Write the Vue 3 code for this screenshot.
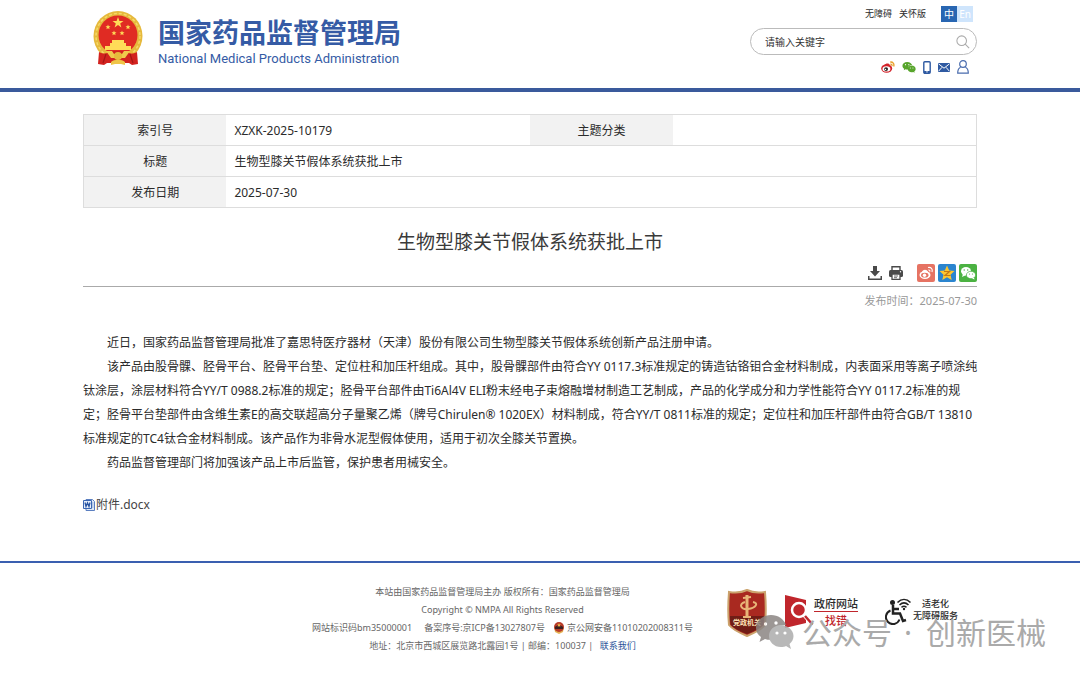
<script setup>
const meta = [
  ['标题', '生物型膝关节假体系统获批上市'],
  ['发布日期', '2025-07-30'],
]
</script>

<template>
  <div class="page">
    <header class="top">
      <div class="wrap top-in">
        <a class="brand" href="#">
          <svg class="emblem" viewBox="0 0 50 56" aria-hidden="true">
            <ellipse cx="25" cy="25" rx="24.5" ry="25" fill="#e6b93c" />
            <ellipse cx="25" cy="25" rx="22" ry="22.5" fill="none" stroke="#f5d869" stroke-width="1.5" stroke-dasharray="3 2" />
            <circle cx="25" cy="24" r="19.5" fill="#e02b23" />
            <path d="m25 6 1.4 3.9h4.1l-3.3 2.5 1.2 4-3.4-2.4-3.4 2.4 1.2-4-3.3-2.5h4.1Z" fill="#ffdc58" />
            <g fill="#ffdc58">
              <path id="star" d="m15 13.5.7 1.7 1.8.1-1.4 1.2.5 1.8-1.6-1-1.6 1 .5-1.8-1.4-1.2 1.8-.1Z" />
              <use href="#star" x="20" />
              <use href="#star" x="6" y="6" />
              <use href="#star" x="14" y="6" />
              <path d="M19 29h12v3h2v3h5v4H12v-4h5v-3h2Z" />
            </g>
            <path d="M6 41c6 3 9 1 11-1h16c2 2 5 4 11 1l1 12-6 1-3-2H14l-3 2-6-1Z" fill="#d2221f" />
            <path d="M13 40h6l2 3h8l2-3h6l-5 7H18Z" fill="#f0c94c" />
            <circle cx="25" cy="45" r="4" fill="#e6b93c" />
            <path d="M18 54v-3c3-3 11-3 14 0v3l-4-1h-6Z" fill="#efc548" />
            <path d="m13 43-3 9m27-9 3 9" stroke="#a31614" stroke-width="1.2" />
          </svg>
          <span class="names">
            <strong>国家药品监督管理局</strong>
            <span>National Medical Products Administration</span>
          </span>
        </a>
        <div class="tools">
          <nav class="lang">
            <a href="#">无障碍</a><a href="#">关怀版</a>
            <span class="switch"><a class="zh" href="#">中</a><a class="en" href="#">En</a></span>
          </nav>
          <form class="search" @submit.prevent>
            <input type="text" aria-label="搜索" placeholder="请输入关键字" />
            <button aria-label="搜索" type="submit">
              <svg viewBox="0 0 16 16"><circle cx="6.5" cy="6.5" r="5.5" /><path d="m10.5 10.5 4.500 4.500" /></svg>
            </button>
          </form>
          <nav class="social">
            <a href="#" aria-label="微博">
              <svg viewBox="0 0 16 14"><ellipse cx="6.500" cy="8.500" rx="6.300" ry="4.800" fill="#d3232b" /><path d="M4 5c1-3 6-3 6 0Z" fill="#d3232b" /><ellipse cx="6.200" cy="9" rx="4.500" ry="3" fill="#fff" /><circle cx="5.800" cy="9.200" r="2.200" fill="#222" /><circle cx="5.200" cy="9.600" r=".8" fill="#fff" /><path d="M10.500 1.200c3-.5 5 2 4 5M10.700 3.700c1.500-.2 2.200.8 1.800 2" fill="none" stroke="#e8a02a" stroke-width="1.500" /></svg>
            </a>
            <a href="#" aria-label="微信">
              <svg viewBox="0 0 16 14"><path d="M6 1C2.500 1 .5 3 .5 5.400c0 1.500.8 2.700 2 3.500L2 10.500l2-1c1 .3 2.500.3 3 0C6.500 6.500 9 4.500 11.500 4.600 11 2.500 9 1 6 1Z" fill="#58a52c" /><path d="M11 5.200c-2.600 0-4.500 1.700-4.500 3.800s2 3.800 4.500 3.800c.6 0 1.200-.1 1.800-.3l1.700.9-.5-1.500c1-.7 1.600-1.700 1.600-2.900 0-2.100-2-3.800-4.600-3.800Z" fill="#58a52c" /><g fill="#fff"><circle cx="4" cy="4.200" r=".7" /><circle cx="7.800" cy="4.200" r=".7" /><circle cx="9.500" cy="8" r=".6" /><circle cx="12.500" cy="8" r=".6" /></g></svg>
            </a>
            <a class="slim" href="#" aria-label="手机版">
              <svg viewBox="0 0 8 13"><rect x=".8" y=".8" width="6.400" height="11.400" rx="1" fill="none" stroke="#2f5aa2" stroke-width="1.400" /><path d="M1 10h6v2H1Z" fill="#2f5aa2" /><path d="M3.300 10.900h1.400" stroke="#fff" /></svg>
            </a>
            <a class="mid" href="#" aria-label="邮箱">
              <svg viewBox="0 0 12 9"><path d="M0 0h12v9H0Z" fill="#2f5aa2" /><path d="m.5.800 5.500 4.400L11.500.800M.5 8.300l3.500-4m7.500 4-3.500-4" fill="none" stroke="#fff" /></svg>
            </a>
            <a class="mid" href="#" aria-label="个人中心">
              <svg viewBox="0 0 12 14"><circle cx="6" cy="4" r="3.300" fill="none" stroke="#4a6cae" stroke-width="1.200" /><path d="M3.600 7.200C1.500 8 .7 10 .7 13.200h10.600c0-3.200-.8-5.200-2.900-6" fill="none" stroke="#4a6cae" stroke-width="1.200" /></svg>
            </a>
          </nav>
        </div>
      </div>
    </header>

    <main class="wrap">
      <table>
        <tbody>
          <tr>
            <th scope="row">索引号</th><td>XZXK-2025-10179</td>
            <th scope="row">主题分类</th><td></td>
          </tr>
          <tr v-for="[name, value] in meta" :key="name">
            <th scope="row">{{ name }}</th><td colspan="3">{{ value }}</td>
          </tr>
        </tbody>
      </table>

      <h1>生物型膝关节假体系统获批上市</h1>

      <div class="actions">
        <button aria-label="下载">
          <svg viewBox="0 0 14 14" fill="#4a4a4a"><path d="M5 0h4v5h3L7 10.500 2 5h3Z" /><path d="M0 10h1.500v2.500h11V10H14v4H0Z" /></svg>
        </button>
        <button aria-label="打印">
          <svg viewBox="0 0 14 14"><path d="M3 4V.7h8V4" fill="none" stroke="#4a4a4a" stroke-width="1.400" /><rect y="4" width="14" height="7" rx="1.500" fill="#4a4a4a" /><path d="M3 8h8v5.300H3Z" fill="#fff" stroke="#4a4a4a" stroke-width="1.300" /><path d="M5 10h4M5 11.700h3" stroke="#4a4a4a" stroke-width=".8" /><circle cx="11.500" cy="5.800" r=".7" fill="#fff" /></svg>
        </button>
        <button class="share first" aria-label="分享到微博">
          <svg viewBox="0 0 18 18"><rect width="18" height="18" rx="2" fill="#e67363" /><ellipse cx="8" cy="11" rx="5.500" ry="4" fill="#fff" /><path d="M5 8c1-3 5-3 6 0Z" fill="#fff" /><ellipse cx="7.800" cy="11.200" rx="3.700" ry="2.400" fill="#e67363" /><circle cx="7.500" cy="11.300" r="1.700" fill="#fff" /><path d="M11 3.500c3-.6 5 1.500 4 4.500M11.300 6c1.300-.2 1.800.6 1.500 1.700" fill="none" stroke="#fff" stroke-width="1.100" /></svg>
        </button>
        <button class="share" aria-label="分享到QQ空间">
          <svg viewBox="0 0 18 18"><rect width="18" height="18" rx="2" fill="#2b85cf" /><path d="m9 1.500 2.200 5 5.300.5-4 3.700 1.200 5.300L9 13.200 4.300 16l1.200-5.300-4-3.700 5.300-.5Z" fill="#fdc62f" /><path d="M6 7.500h5.500L7 11.500h5.500" fill="none" stroke="#c57814" stroke-width="1.200" /></svg>
        </button>
        <button class="share" aria-label="分享到微信">
          <svg viewBox="0 0 18 18"><rect width="18" height="18" rx="2" fill="#4bb242" /><ellipse cx="7" cy="7.200" rx="5" ry="4.200" fill="#fff" /><path d="m3 13 1-3 3 1Z" fill="#fff" /><ellipse cx="12" cy="11" rx="4.600" ry="3.700" fill="#fff" stroke="#4bb242" stroke-width=".7" /><path d="m15.500 15.500-.5-2-2 1Z" fill="#fff" /><g fill="#4bb242"><circle cx="5.200" cy="6" r=".7" /><circle cx="8.700" cy="6" r=".7" /><circle cx="10.500" cy="10" r=".6" /><circle cx="13.500" cy="10" r=".6" /></g></svg>
        </button>
      </div>
      <p class="date">发布时间：2025-07-30</p>

      <article>
        <p>近日，国家药品监督管理局批准了嘉思特医疗器材（天津）股份有限公司生物型膝关节假体系统创新产品注册申请。</p>
        <p>该产品由股骨髁、胫骨平台、胫骨平台垫、定位柱和加压杆组成。其中，股骨髁部件由符合YY 0117.3标准规定的铸造钴铬钼合金材料制成，内表面采用等离子喷涂纯钛涂层，涂层材料符合YY/T 0988.2标准的规定；胫骨平台部件由Ti6Al4V ELI粉末经电子束熔融增材制造工艺制成，产品的化学成分和力学性能符合YY 0117.2标准的规定；胫骨平台垫部件由含维生素E的高交联超高分子量聚乙烯（牌号Chirulen® 1020EX）材料制成，符合YY/T 0811标准的规定；定位柱和加压杆部件由符合GB/T 13810标准规定的TC4钛合金材料制成。该产品作为非骨水泥型假体使用，适用于初次全膝关节置换。</p>
        <p>药品监督管理部门将加强该产品上市后监管，保护患者用械安全。</p>
      </article>

      <a class="file" href="#">
        <svg viewBox="0 0 12 12" aria-hidden="true"><path d="M3 .5h6.500l2 2v9H3Z" fill="#dfe9f8" stroke="#5b7fc0" /><path d="M8 4h2.500M8 6h2.500M8 8h2.500" stroke="#8aa6d6" /><path d="M.5 1.500h8v8h-8Z" fill="#e8f0fb" stroke="#3a66b3" /><path d="m2 3.500 1 4 1.500-3.500L6 7.500l1-4" fill="none" stroke="#2b56a3" stroke-width="1.300" /></svg>附件.docx</a>
    </main>

    <footer>
      <div class="wrap foot">
        <div class="legal">
          <p>本站由国家药品监督管理局主办 版权所有：国家药品监督管理局</p>
          <p>Copyright © NMPA All Rights Reserved</p>
          <p class="codes"><span>网站标识码bm35000001</span><span>备案序号:京ICP备13027807号</span><span class="police"><svg viewBox="0 0 12 12" aria-hidden="true"><path d="M1 5h10l-1 5-4 2-4-2Z" fill="#e4b255" /><circle cx="6" cy="5" r="5" fill="#b83a28" /><path d="M2 5c2-2 6-2 8 0v2H2Z" fill="#3c2020" /><path d="m6 1 .6 1.400H8L6.900 3.300 7.300 5 6 4 4.700 5l.4-1.700L4 2.400h1.400Z" fill="#f0bc4f" /></svg>京公网安备11010202008311号</span></p>
          <p>地址：北京市西城区展览路北露园1号 | 邮编：100037 | <a href="#">联系我们</a></p>
        </div>
        <div class="badges">
          <a class="shield" href="#">
            <svg viewBox="0 0 40 48" aria-hidden="true"><path d="M20 1c6 3 12 3 18 2 1 12 1 23 0 33-4 5-11 8-18 11C13 44 6 41 2 36 1 26 1 15 2 3c6 1 12 1 18-2Z" fill="#a92920" stroke="#cba36d" stroke-width="2" /><path d="M3 27h34c0 3 0 6-1 9-5 4-9 6-16 9C13 42 8 40 4 36c-1-3-1-6-1-9Z" fill="#701d16" /><g fill="none" stroke="#e8b678"><path d="M20 6v22" stroke-width="3" /><path d="M16 28h8M16 9l8-1" stroke-width="2" /><path d="M18 13c-7 2-4 8 3 7 8-1 11-6 5-7" stroke-width="2" /></g></svg>
            <span>党政机关</span>
          </a>
          <a class="report" href="#">
            <svg viewBox="0 0 29 33" aria-hidden="true"><path d="M0 0 21 5v23L0 33Z" fill="#c0262c" /><circle cx="14" cy="15" r="7" fill="#c0262c" stroke="#fff" stroke-width="2.500" /><path d="m19 20 8 9" stroke="#fff" stroke-width="4" /><path d="m20 21 7.500 8.500" stroke="#c0262c" stroke-width="2.500" /></svg>
            <span><b>政府网站</b><em>找错</em></span>
          </a>
          <a class="access" href="#">
            <svg viewBox="0 0 27 27" aria-hidden="true" fill="none" stroke="#222"><circle cx="7.500" cy="4.500" r="2.500" fill="#222" stroke="none" /><path d="M8 7v8.500h7l3 7.500 3-1M8 11h6" stroke-width="2.500" /><path d="M5.500 12.500a7 7 0 1 0 9 9" stroke-width="2" /><path d="M12.500 4.500c4-4 9-4 13 0M14.500 7c3-2.800 6-2.800 9 0M16.500 9.300c2-1.600 3-1.600 5 0" stroke-width="1.600" /><circle cx="19" cy="11" r="1.200" fill="#222" stroke="none" /></svg>
            <span>适老化<br />无障碍服务</span>
          </a>
        </div>
      </div>
      <div class="watermark">
        <svg viewBox="0 0 38 34" aria-hidden="true"><path d="M15 0C6 0 0 6 0 13c0 4 2 7 5 9l-1.500 5 5.500-3c2 .7 4 .9 6 .8C13 16 21 9 30 10 28 4 22 0 15 0Z" fill="#8b8583" /><path d="M25 10c-7 0-12 5-12 11s5 11 12 11c2 0 4-.4 5-1l5 3-1.500-5c2.500-2 4-5 4-8 0-6-6-11-12.500-11Z" fill="#acacac" /><g fill="#fff"><circle cx="9.500" cy="9" r="1.700" /><circle cx="20" cy="8" r="1.700" /><circle cx="21" cy="18" r="1.600" /><circle cx="29" cy="18" r="1.600" /></g></svg>
        <span>公众号<i>·</i>创新医械</span>
      </div>
    </footer>
  </div>
</template>

<style>
body { margin: 0; background: #fff; }
</style>

<style scoped>
.page { font: 12px/24px "Noto Sans", "Noto Sans CJK SC", sans-serif; color: #2b2b2b; }
.page * { box-sizing: border-box; }
a { color: inherit; text-decoration: none; }
p, h1 { margin: 0; }
svg { display: block; width: 100%; }
button { border: 0; padding: 0; background: none; cursor: pointer; }
.wrap { margin: 0 103px 0 83px; }
.top { border-bottom: 4px solid #3a5a9c; }
.top-in { display: flex; justify-content: space-between; height: 88px; }
.brand { display: flex; gap: 15px; margin: 11px 0 0 10px; color: #355ba5; }
.emblem { width: 50px; height: 56px; }
.names { display: flex; flex-direction: column; white-space: nowrap; }
.names strong { font: bold 27px/38px "Noto Sans CJK SC", sans-serif; margin-top: 2px; }
.names span { font: 13px/16px Roboto, sans-serif; }
.tools { display: flex; flex-direction: column; width: 227px; margin-top: 6px; }
.lang { display: flex; align-items: center; justify-content: flex-end; gap: 7px; padding-right: 4px; font-size: 9px; line-height: 16px; }
.switch { display: flex; margin-left: 8px; text-align: center; font-size: 10px; color: #fff; }
.switch a { width: 16px; }
.zh { background: #2866b2; }
.en { background: #cfe5fc; }
.search { display: flex; align-items: center; height: 27px; margin-top: 6px; padding: 0 6px 0 14px; border: 1px solid #bbb; border-radius: 14px; }
.search input { flex: 1; min-width: 0; padding: 0; border: 0; outline: 0; background: none; font: 10px/20px "Noto Sans", "Noto Sans CJK SC", sans-serif; }
.search input::placeholder { color: #333; opacity: 1; }
.search button { width: 14px; }
.search svg { fill: none; stroke: #aaa; stroke-width: 1.2; }
.social { display: flex; align-items: center; justify-content: flex-end; gap: 7px; padding-right: 8px; margin-top: 5px; }
.social a { width: 14px; }
.social .slim { width: 8px; }
.social .mid { width: 12px; }
table { width: 100%; margin-top: 22px; border-collapse: collapse; table-layout: fixed; }
tr { height: 31px; border: 1px solid #ddd; }
th { width: 16%; padding: 2px 0 0; background: #f2f2f2; font-weight: 400; text-align: center; }
td { width: 34%; padding: 2px 8px 0; }
h1 { margin-top: 17px; font: 400 19px/32px "Noto Sans CJK SC", sans-serif; color: #3a3a3a; text-align: center; }
.actions { display: flex; align-items: center; justify-content: flex-end; gap: 7px; height: 30px; padding: 6px 0 3px; border-bottom: 1px solid #aaa; }
.actions button { width: 14px; }
.actions .share { width: 18px; margin-left: -4px; }
.actions .first { margin-left: 7px; }
.date { margin-top: 2px; color: #999; font-size: 11px; text-align: right; }
article { margin: 18px -4px 0 0; }
article p { text-indent: 2em; }
.file { display: inline-flex; align-items: center; gap: 1px; margin-top: 18px; color: #444; }
.file svg { width: 12px; }
footer { position: relative; margin-top: 42px; border-top: 2px solid #3a5fb0; }
.foot { display: flex; padding-top: 20px; }
.legal { margin-left: 229px; flex: none; text-align: center; font-size: 9px; line-height: 18px; color: #666; }
.codes { display: flex; gap: 12px; }
.codes .police { display: flex; align-items: center; gap: 2px; margin-left: -4px; }
.codes svg { width: 12px; }
.legal a { color: #2a5298; margin-left: 4px; }
.badges { display: flex; align-items: flex-start; margin: 6px 0 0 34px; }
.shield { position: relative; width: 40px; }
.shield span { position: absolute; left: 0; right: 0; top: 24px; text-align: center; color: #ffe2b5; font: bold 7px/18px "Noto Sans CJK SC", sans-serif; }
.report { display: flex; margin: 6px 0 0 18px; }
.report svg { width: 29px; height: 33px; }
.report b, .report em { display: block; font: 500 11px/16px "Noto Sans CJK SC", sans-serif; text-align: center; white-space: nowrap; }
.report em { color: #c0262c; border-top: 1px solid #c0262c; }
.access { display: flex; gap: 1px; margin: 9px 0 0 27px; }
.access svg { width: 27px; height: 27px; }
.access span { font: 500 9px/12px "Noto Sans CJK SC", sans-serif; text-align: center; white-space: nowrap; }
.watermark { position: absolute; right: 34px; top: 49px; display: flex; align-items: center; gap: 8px; color: #aaa; font: 30px/38px "Noto Sans CJK SC", sans-serif; white-space: nowrap; }
.watermark svg { width: 38px; opacity: .85; }
.watermark i { font: 30px/38px "Noto Sans", sans-serif; margin: 0 14px 0 12px; }
</style>
